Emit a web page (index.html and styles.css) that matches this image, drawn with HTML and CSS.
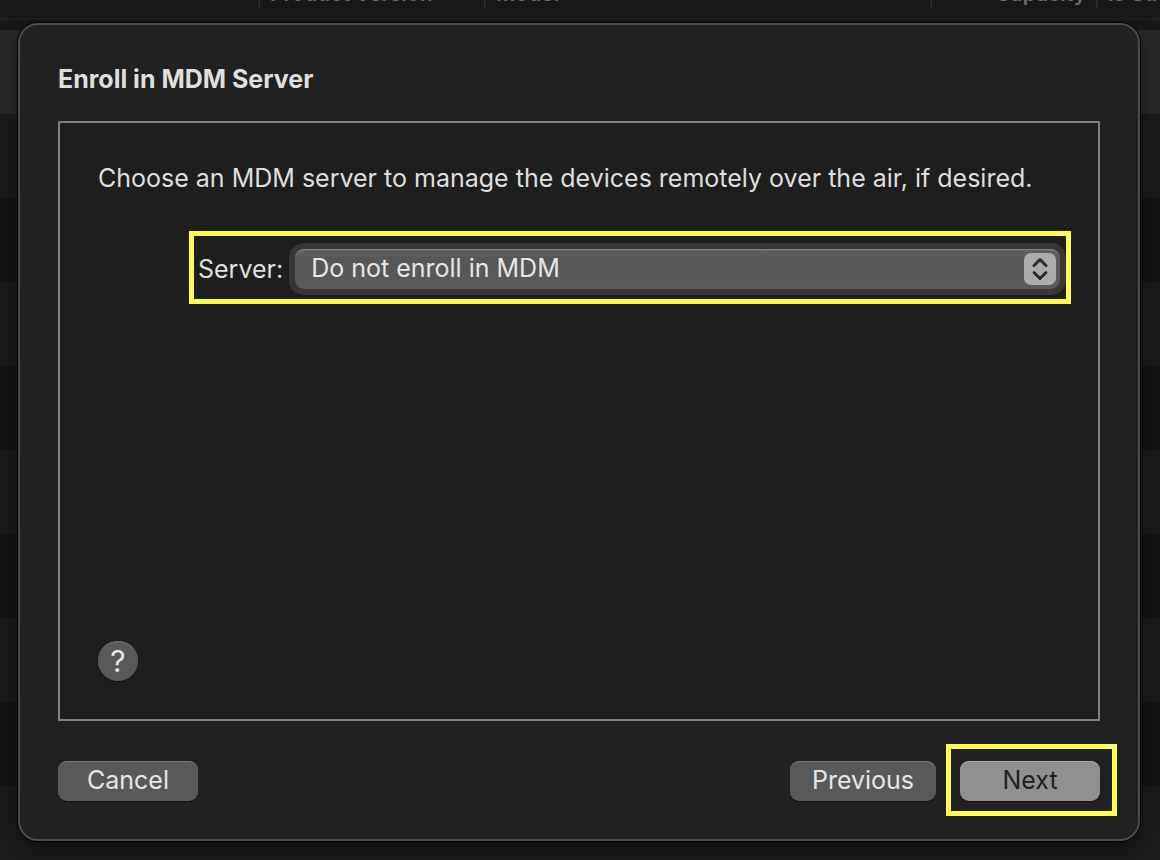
FILE: index.html
```html
<!DOCTYPE html>
<html lang="en">
<head>
<meta charset="utf-8">
<meta name="viewport" content="width=device-width, initial-scale=1">
<title>Enroll in MDM Server</title>
<link rel="stylesheet" href="styles.css">
</head>
<body>
<div class="backdrop">
  <table class="devices">
    <colgroup>
      <col class="col-name"><col class="col-version"><col><col class="col-capacity"><col class="col-last">
    </colgroup>
    <thead>
      <tr>
        <td></td>
        <th scope="col"><span class="heading">Product Version</span></th>
        <th scope="col"><span class="heading">Model</span></th>
        <th scope="col"><span class="heading heading-end">Capacity</span></th>
        <th scope="col"><span class="heading">Is Su</span></th>
      </tr>
    </thead>
  </table>
  <div class="rows">
    <div class="row row-selected"></div>
    <div class="row"></div>
    <div class="row"></div>
    <div class="row"></div>
    <div class="row"></div>
    <div class="row"></div>
    <div class="row"></div>
    <div class="row"></div>
    <div class="row"></div>
    <div class="row"></div>
  </div>
</div>
<main class="sheet" role="dialog" aria-labelledby="sheet-title">
  <h1 class="title" id="sheet-title">Enroll in MDM Server</h1>
  <section class="panel">
    <p class="intro">Choose an MDM server to manage the devices remotely over the air, if desired.</p>
    <div class="field">
      <label class="label" for="server">Server:</label>
      <div class="popup">
        <select class="select" id="server">
          <option>Do not enroll in MDM</option>
        </select>
        <svg class="stepper" viewBox="0 0 32 32" aria-hidden="true">
          <rect width="32" height="32" rx="7" fill="#acacac"/>
          <path d="M10 12.500L16 6.500L22 12.500M10 19.500L16 25.500L22 19.500" fill="none" stroke="#2a2a2a" stroke-width="3" stroke-linecap="round" stroke-linejoin="round"/>
        </svg>
      </div>
    </div>
    <button class="help" type="button">?</button>
  </section>
  <footer class="actions">
    <button class="button" type="button">Cancel</button>
    <div class="actions-end">
      <button class="button button-wide" type="button">Previous</button>
      <div class="callout">
        <button class="button button-default" type="button">Next</button>
      </div>
    </div>
  </footer>
</main>
</body>
</html>
```
FILE: styles.css
```css
* {
  box-sizing: border-box;
}

body {
  margin: 0;
  min-height: 100vh;
  display: flex;
  padding: 23px 20px 19px 18px;
  background: #181818;
  color: #dfdfdf;
  font-family: Inter, "Liberation Sans", sans-serif;
  font-size: 25px;
  line-height: 34px;
}

button,
select {
  font: inherit;
  color: inherit;
}

/* Device list behind the sheet */
.backdrop {
  position: absolute;
  inset: 0;
  overflow: hidden;
}

.devices {
  width: 100%;
  margin-top: -21px;
  table-layout: fixed;
  border-collapse: collapse;
  border-bottom: 2px solid #1f1f1f;
}

.col-name {
  width: 258px;
}

.col-version {
  width: 226px;
}

.col-capacity {
  width: 166px;
}

.col-last {
  width: 64px;
}

.devices th,
.devices td {
  height: 40px;
  padding: 0;
  text-align: left;
  vertical-align: top;
}

.heading {
  display: block;
  height: 29px;
  padding: 0 10px;
  border-left: 2px solid #292929;
  color: #6c6c6c;
  font-size: 21px;
  font-weight: 600;
  line-height: 30px;
  white-space: nowrap;
}

.heading-end {
  text-align: right;
}

.rows {
  padding-top: 10px;
}

.row {
  height: 84px;
  background: #1a1a1a;
}

.row:nth-child(odd) {
  background: #141414;
}

.row.row-selected {
  background: #282828;
}

/* Sheet */
.sheet {
  position: relative;
  flex: 1;
  display: flex;
  flex-direction: column;
  padding: 38px;
  border: 2px solid #4c4c4c;
  border-radius: 20px;
  background: #212121;
  box-shadow: 0 0 0 1px #000, 0 8px 24px rgba(0, 0, 0, 0.4);
}

.title {
  margin: 0 0 26px;
  font-size: 25px;
  font-weight: 700;
  line-height: 32px;
}

.panel {
  flex: 1;
  display: flex;
  flex-direction: column;
  padding: 38px 27px 38px 38px;
  border: 2px solid #808080;
  background: #1e1e1e;
}

.intro {
  margin: 0 0 36px;
}

.field {
  display: flex;
  align-items: center;
  gap: 12px;
  margin-left: 91px;
  padding: 13px 6px 10px 4px;
  border: 5px solid #fffb4f;
}

.popup {
  position: relative;
  flex: 1;
}

.select {
  display: block;
  appearance: none;
  width: 100%;
  height: 40px;
  padding: 0 40px 2px 16px;
  border: 0;
  border-radius: 9px;
  outline: 0;
  background: linear-gradient(#646464, #5c5c5c 7px, #565656 8px, #5a5a5a);
  color: #e6e6e6;
  box-shadow: inset 0 1px #838383, 0 0 0 6px #373737;
}

.stepper {
  position: absolute;
  top: 4px;
  right: 4px;
  width: 32px;
  height: 32px;
  pointer-events: none;
}

.help {
  width: 40px;
  height: 40px;
  margin-top: auto;
  padding: 0;
  border: 0;
  border-radius: 50%;
  background: #595959;
  color: #e6e6e6;
  font-size: 30px;
  line-height: 40px;
  box-shadow: inset 0 1px #747474, 0 1px 1px #141414;
}

.actions {
  display: flex;
  justify-content: space-between;
  margin-top: 40px;
}

.actions-end {
  display: flex;
  gap: 24px;
}

.button {
  width: 140px;
  height: 40px;
  padding: 0 0 2px;
  border: 0;
  border-radius: 9px;
  background: #595959;
  color: #e6e6e6;
  box-shadow: inset 0 1px #777, 0 1px 1px #141414;
}

.button-wide {
  width: 146px;
}

.button-default {
  background: #909090;
  color: #212121;
  box-shadow: inset 0 1px #a8a8a8, 0 1px 1px #141414;
}

.callout {
  position: relative;
}

.callout::after {
  content: "";
  position: absolute;
  inset: -17px -17px -15px -14px;
  border: 5px solid #fffb4f;
  pointer-events: none;
}
```
